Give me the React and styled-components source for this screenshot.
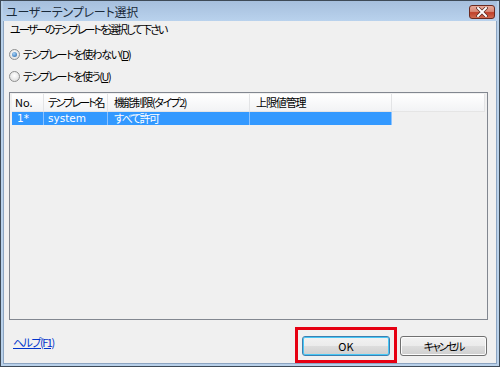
import React from "react";
import styled, { createGlobalStyle } from "styled-components";

const Global = createGlobalStyle`
  html, body { margin: 0; padding: 0; background: #f0f0f0; }
  body { font-family: "Noto Sans CJK JP", "Noto Sans", sans-serif; font-size: 12px; color: #000; }
  * { box-sizing: border-box; }
`;

const Window = styled.div`
  position: relative;
  width: 500px;
  height: 367px;
  display: flex;
  flex-direction: column;
  border: 1px solid #3e4a57;
  background: #b9d1ea;
  padding: 0 2px 2px 2px;
`;

const TitleBar = styled.div`
  height: 20px;
  display: flex;
  align-items: center;
  justify-content: space-between;
  padding: 0 2px 0 3px;
  background: linear-gradient(#a6bfdd, #b9d2ed);
  font-feature-settings: "palt";
  font-size: 12px;
  color: #1a2a3a;
  letter-spacing: -0.2px;
`;

const CloseBtn = styled.div`
  width: 26px;
  height: 14px;
  margin-top: 1px;
  border: 1px solid #6b2a20;
  border-radius: 3px;
  background: linear-gradient(#e8a898 0%, #d88a78 45%, #c0402a 55%, #d06a50 100%);
  display: flex;
  align-items: center;
  justify-content: center;
`;

const Body = styled.div`
  flex: 1;
  display: flex;
  flex-direction: column;
  background: #f0f0f0;
  border: 1px solid #8da5c2;
  border-top: none;
  padding: 0 8px 0 5px;
  font-feature-settings: "palt";
`;

const Prompt = styled.div`
  height: 16px;
  line-height: 16px;
  padding-left: 1px;
  font-size: 11px;
  letter-spacing: -2px;
`;

const RadioRow = styled.label`
  display: flex;
  align-items: center;
  gap: 3px;
  height: 14px;
  margin-top: ${(p) => p.$top}px;
  font-size: 11px;
  letter-spacing: -1.4px;
`;

const RadioDot = styled.span`
  width: 11px;
  height: 11px;
  flex: none;
  border-radius: 50%;
  border: 1px solid #8e8f8f;
  background: radial-gradient(circle at 50% 40%, #ffffff, #d8d8d8);
  display: flex;
  align-items: center;
  justify-content: center;
  &::after {
    content: "";
    display: ${(p) => (p.$on ? "block" : "none")};
    width: 5px;
    height: 5px;
    border-radius: 50%;
    background: radial-gradient(circle at 40% 35%, #a8d4f8, #1b5fa8);
  }
`;

const Under = styled.span`
  text-decoration: underline;
`;

const ListBox = styled.div`
  margin-top: 9px;
  height: 228px;
  border: 1px solid #828790;
  background: #f0f0f0;
  padding: 1px 2px;
  display: flex;
  flex-direction: column;
`;

const Row = styled.div`
  display: grid;
  grid-template-columns: 32px 64px 142px 142px 1fr;
  height: ${(p) => (p.$header ? 18 : 13)}px;
`;

const HeadCell = styled.div`
  background: linear-gradient(#ffffff, #f2f3f5);
  border-right: 1px solid #e3e4e6;
  border-bottom: 1px solid #e5e5e5;
  padding-left: ${(p) => p.$pad || 4}px;
  line-height: 17px;
  font-size: 11px;
  letter-spacing: ${(p) => p.$ls || 0}px;
  white-space: nowrap;
  overflow: hidden;
`;

const Cell = styled.div`
  background: ${(p) => (p.$sel ? "#3399ff" : "transparent")};
  color: #fff;
  border-right: 1px solid ${(p) => (p.$sel ? "#8cc3ff" : "transparent")};
  padding-left: ${(p) => p.$pad || 4}px;
  line-height: 13px;
  font-size: ${(p) => (p.$latin ? 10.5 : 11)}px;
  letter-spacing: ${(p) => p.$ls || 0}px;
  white-space: nowrap;
  font-family: ${(p) => (p.$latin ? '"DejaVu Sans", sans-serif' : "inherit")};
`;

const Footer = styled.div`
  flex: 1;
  display: flex;
  align-items: center;
  justify-content: space-between;
  padding: 0 1px 0 4px;
`;

const HelpLink = styled.a`
  color: #0033cc;
  text-decoration: underline;
  font-size: 11px;
  letter-spacing: -1.5px;
  cursor: pointer;
`;

const Buttons = styled.div`
  display: flex;
  gap: 10px;
  margin-top: 9px;
`;

const Button = styled.button`
  width: ${(p) => p.$w}px;
  height: 20px;
  border-radius: 3px;
  border: 1px solid ${(p) => (p.$default ? "#3c7fb1" : "#707070")};
  box-shadow: ${(p) => (p.$default ? "inset 0 0 0 1px #48c7f5" : "inset 0 0 0 1px #fcfcfc")};
  background: linear-gradient(#f2f2f2 0%, #ebebeb 50%, #dddddd 51%, #cfcfcf 100%);
  font-family: "Noto Sans CJK JP", sans-serif;
  font-feature-settings: "palt";
  font-size: 11px;
  letter-spacing: ${(p) => p.$ls || 0}px;
  padding: 0;
  color: #000;
`;

const Highlight = styled.div`
  position: absolute;
  left: 294px;
  top: 326px;
  width: 102px;
  height: 36px;
  border: 3px solid #e60012;
  pointer-events: none;
`;

export default function App() {
  return (
    <>
      <Global />
      <Window>
        <TitleBar>
          <span>ユーザーテンプレート選択</span>
          <CloseBtn>
            <svg width="12" height="10" viewBox="0 0 12 10">
              <path d="M2 1 L10 9 M10 1 L2 9" stroke="#5a2a22" strokeWidth="3.4" strokeLinecap="square" />
              <path d="M2 1 L10 9 M10 1 L2 9" stroke="#ffffff" strokeWidth="2" strokeLinecap="square" />
            </svg>
          </CloseBtn>
        </TitleBar>
        <Body>
          <Prompt>ユーザーのテンプレートを選択して下さい</Prompt>
          <RadioRow $top={10}>
            <RadioDot $on />
            <span>
              テンプレートを使わない(<Under>D</Under>)
            </span>
          </RadioRow>
          <RadioRow $top={8}>
            <RadioDot />
            <span>
              テンプレートを使う(<Under>U</Under>)
            </span>
          </RadioRow>
          <ListBox>
            <Row $header>
              <HeadCell $pad={3}>No.</HeadCell>
              <HeadCell $ls={-2}>テンプレート名</HeadCell>
              <HeadCell $pad={6} $ls={-1.5}>機能制限(タイプ2)</HeadCell>
              <HeadCell $pad={6} $ls={-1.1}>上限値管理</HeadCell>
              <HeadCell />
            </Row>
            <Row>
              <Cell $sel $latin $pad={5}>1*</Cell>
              <Cell $sel $latin>system</Cell>
              <Cell $sel $pad={6} $ls={-1.5}>すべて許可</Cell>
              <Cell $sel />
              <Cell />
            </Row>
          </ListBox>
          <Footer>
            <HelpLink>ヘルプ(F1)</HelpLink>
            <Buttons>
              <Button $default $w={88}>OK</Button>
              <Button $w={87} $ls={-2}>キャンセル</Button>
            </Buttons>
          </Footer>
        </Body>
        <Highlight />
      </Window>
    </>
  );
}
